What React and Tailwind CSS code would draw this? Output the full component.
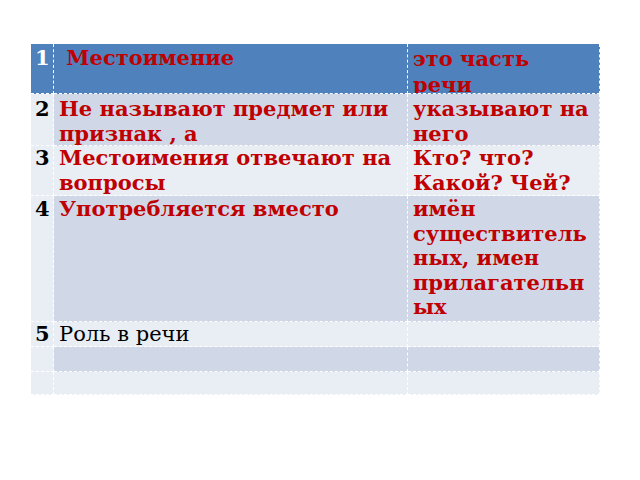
export default function App() {
  const font = { fontFamily: '"DejaVu Serif", serif' };
  const cell = "border-r border-b border-dashed border-white overflow-hidden";
  const num = `${cell} pl-[4px] font-bold text-black bg-[#e9edf4]`;
  const txt = "pl-[5px] font-bold text-[#c00000]";
  return (
    <div className="w-[640px] h-[480px] bg-white relative" style={font}>
      <div className="absolute left-[30px] top-[43px] w-[569px] grid grid-cols-[23px_354px_192px] text-[21px] leading-[24.5px] border-t border-l border-dashed border-white">
        {/* row 1 */}
        <div className={`${cell} h-[50px] bg-[#4f81bd] pl-[4px] pt-[2px] font-bold text-white`}>1</div>
        <div className={`${cell} h-[50px] bg-[#4f81bd] pt-[2px] ${txt} whitespace-pre`}> Местоимение</div>
        <div className={`${cell} h-[50px] bg-[#4f81bd] pt-[2px] ${txt} leading-[25.5px]`}>это часть<br />речи</div>
        {/* row 2 */}
        <div className={`${num} h-[52px] pt-[3px]`}>2</div>
        <div className={`${cell} h-[52px] bg-[#d0d8e8] pt-[3px] ${txt} whitespace-nowrap`}>Не называют предмет или<br />признак , а</div>
        <div className={`${cell} h-[52px] bg-[#d0d8e8] pt-[3px] ${txt} whitespace-nowrap`}>указывают на<br />него</div>
        {/* row 3 */}
        <div className={`${num} h-[50px] pt-[0px]`}>3</div>
        <div className={`${cell} h-[50px] bg-[#e9edf4] pt-[0px] ${txt} whitespace-nowrap`}>Местоимения отвечают на<br />вопросы</div>
        <div className={`${cell} h-[50px] bg-[#e9edf4] pt-[0px] ${txt} whitespace-nowrap`}>Кто? что?<br />Какой? Чей?</div>
        {/* row 4 */}
        <div className={`${num} h-[126px] pt-[1px]`}>4</div>
        <div className={`${cell} h-[126px] bg-[#d0d8e8] pt-[1px] ${txt} whitespace-nowrap`}>Употребляется вместо</div>
        <div className={`${cell} h-[126px] bg-[#d0d8e8] pt-[1px] ${txt} whitespace-nowrap`}>имён<br />существитель<br />ных, имен<br />прилагательн<br />ых</div>
        {/* row 5 */}
        <div className={`${num} h-[25px] pt-[0px]`}>5</div>
        <div className={`${cell} h-[25px] bg-[#e9edf4] pt-[0px] pl-[5px] text-black whitespace-nowrap`}>Роль в речи</div>
        <div className={`${cell} h-[25px] bg-[#e9edf4]`}></div>
        {/* row 6 */}
        <div className={`${cell} h-[25px] bg-[#e9edf4]`}></div>
        <div className={`${cell} h-[25px] bg-[#d0d8e8]`}></div>
        <div className={`${cell} h-[25px] bg-[#d0d8e8]`}></div>
        {/* row 7 */}
        <div className={`${cell} h-[23px] bg-[#e9edf4]`}></div>
        <div className={`${cell} h-[23px] bg-[#e9edf4]`}></div>
        <div className={`${cell} h-[23px] bg-[#e9edf4]`}></div>
      </div>
    </div>
  );
}
